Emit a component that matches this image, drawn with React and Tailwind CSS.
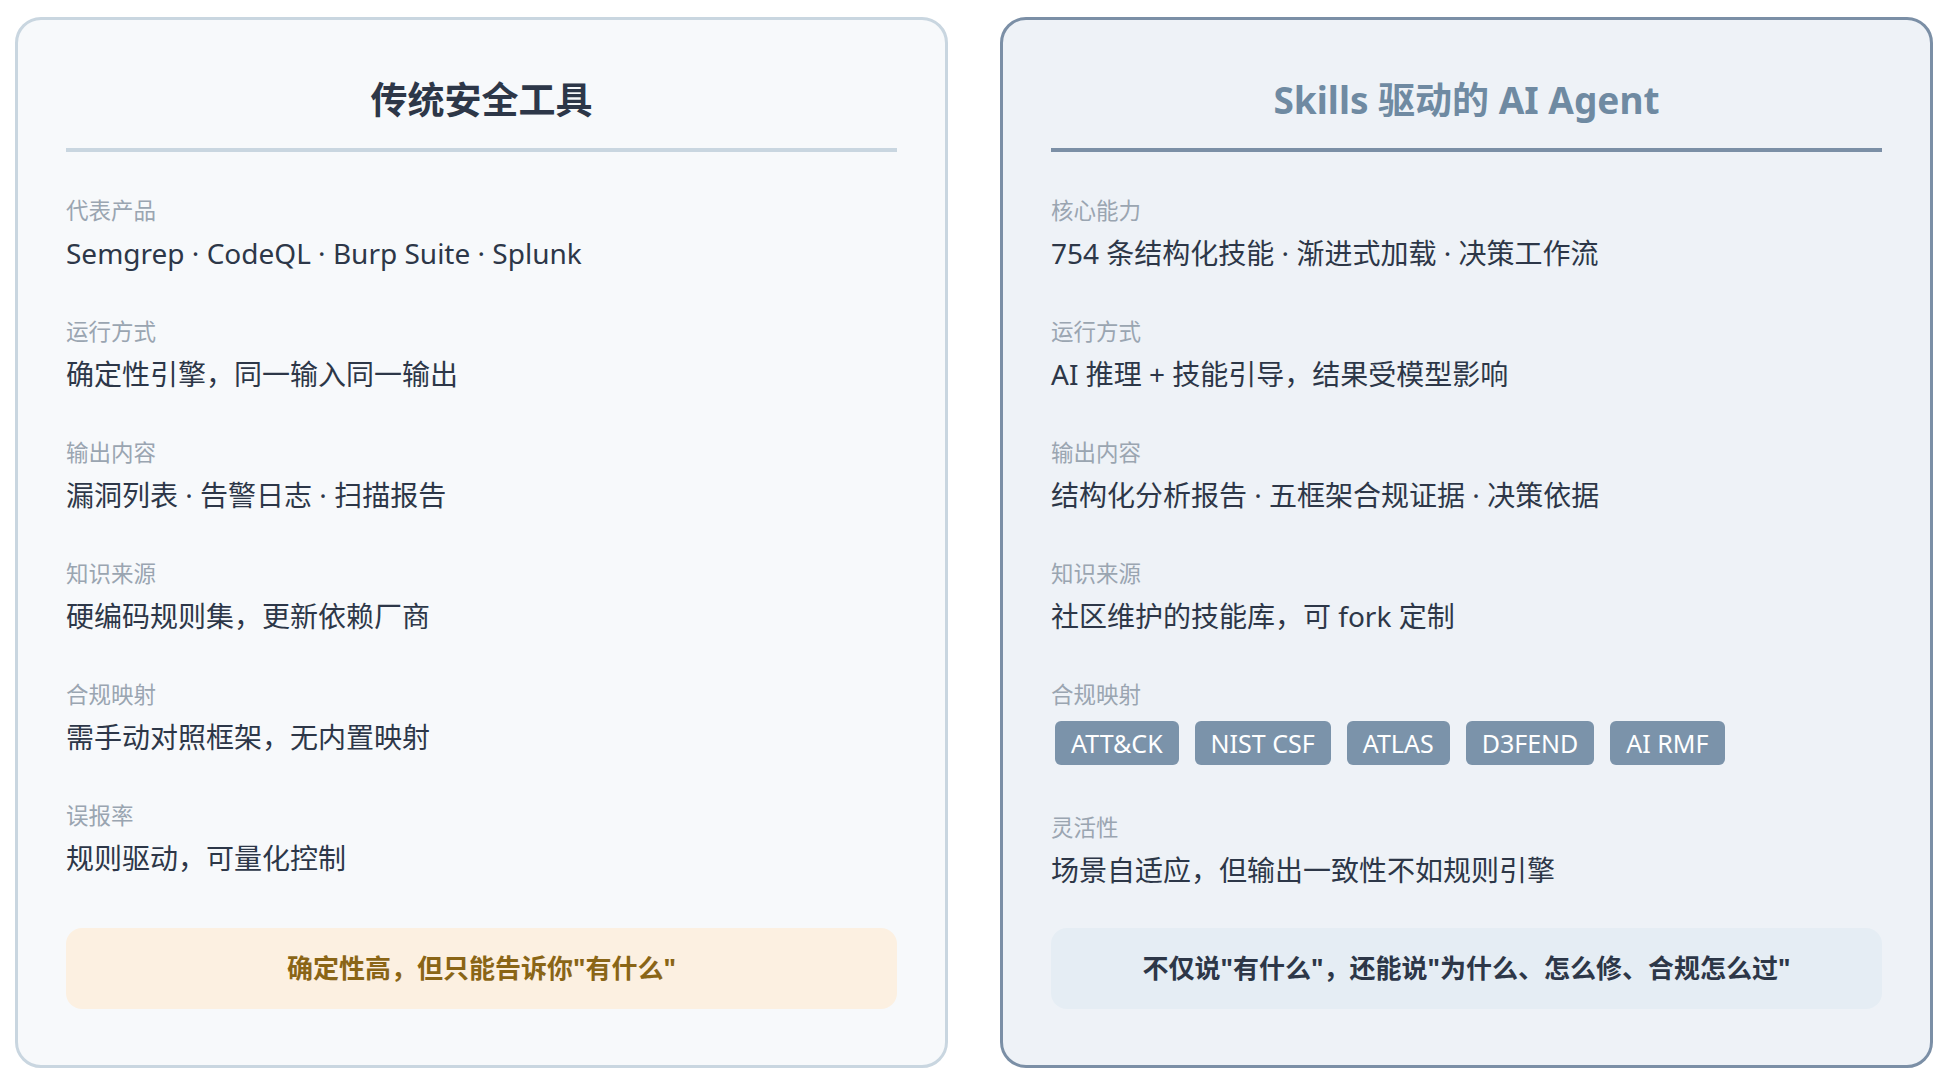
const font = { fontFamily: '"Noto Sans", "Noto Sans CJK SC", sans-serif' };

function Row({ label, children }) {
  return (
    <div className="mt-[45px] first:mt-[44px]">
      <div className="text-[22.5px] leading-[30px] text-[#9aa5b1]">{label}</div>
      <div className="mt-[8px] text-[28px] leading-[38px] text-[#2d3748]">{children}</div>
    </div>
  );
}

function Card({ title, titleColor, border, bg, divider, rows, note, noteBg, noteColor }) {
  return (
    <div className={`flex h-[1051px] w-[933px] flex-col rounded-[26px] border-[3px] px-[48px] pb-[56px] ${border} ${bg}`}>
      <h2 className={`pt-[44px] text-center text-[37px] font-bold leading-[72px] ${titleColor}`}>{title}</h2>
      <div className={`mt-[12px] h-[4px] w-full ${divider}`} />
      <div>
        {rows.map((r) => (
          <Row key={r.label} label={r.label}>{r.value}</Row>
        ))}
      </div>
      <div className={`mt-auto flex h-[81px] items-center justify-center rounded-[16px] text-[26px] font-bold ${noteBg} ${noteColor}`}>
        {note}
      </div>
    </div>
  );
}

const tags = ["ATT&CK", "NIST CSF", "ATLAS", "D3FEND", "AI RMF"];

export default function App() {
  const left = [
    { label: "代表产品", value: "Semgrep · CodeQL · Burp Suite · Splunk" },
    { label: "运行方式", value: "确定性引擎，同一输入同一输出" },
    { label: "输出内容", value: "漏洞列表 · 告警日志 · 扫描报告" },
    { label: "知识来源", value: "硬编码规则集，更新依赖厂商" },
    { label: "合规映射", value: "需手动对照框架，无内置映射" },
    { label: "误报率", value: "规则驱动，可量化控制" },
  ];
  const right = [
    { label: "核心能力", value: "754 条结构化技能 · 渐进式加载 · 决策工作流" },
    { label: "运行方式", value: "AI 推理 + 技能引导，结果受模型影响" },
    { label: "输出内容", value: "结构化分析报告 · 五框架合规证据 · 决策依据" },
    { label: "知识来源", value: "社区维护的技能库，可 fork 定制" },
    {
      label: "合规映射",
      value: (
        <div className="flex gap-[16px] pl-[4px] pt-[3px] pb-[3px]">
          {tags.map((t) => (
            <span key={t} className="rounded-[6px] bg-[#7b93aa] px-[16px] text-[25px] leading-[44px] text-white">{t}</span>
          ))}
        </div>
      ),
    },
    { label: "灵活性", value: "场景自适应，但输出一致性不如规则引擎" },
  ];
  return (
    <div className="flex min-h-screen gap-[52px] bg-white pl-[15px] pt-[17px]" style={font}>
      <Card
        title="传统安全工具"
        titleColor="text-[#2d3748]"
        border="border-[#c9d6e0]"
        bg="bg-[#f7f9fb]"
        divider="bg-[#c9d6e0]"
        rows={left}
        note={'确定性高，但只能告诉你"有什么"'}
        noteBg="bg-[#fcf0e1]"
        noteColor="text-[#8a6516]"
      />
      <Card
        title="Skills 驱动的 AI Agent"
        titleColor="text-[#6f8aa2]"
        border="border-[#7b8fa6]"
        bg="bg-[#eef2f7]"
        divider="bg-[#7b8fa6]"
        rows={right}
        note={'不仅说"有什么"，还能说"为什么、怎么修、合规怎么过"'}
        noteBg="bg-[#e5edf4]"
        noteColor="text-[#2d3748]"
      />
    </div>
  );
}
